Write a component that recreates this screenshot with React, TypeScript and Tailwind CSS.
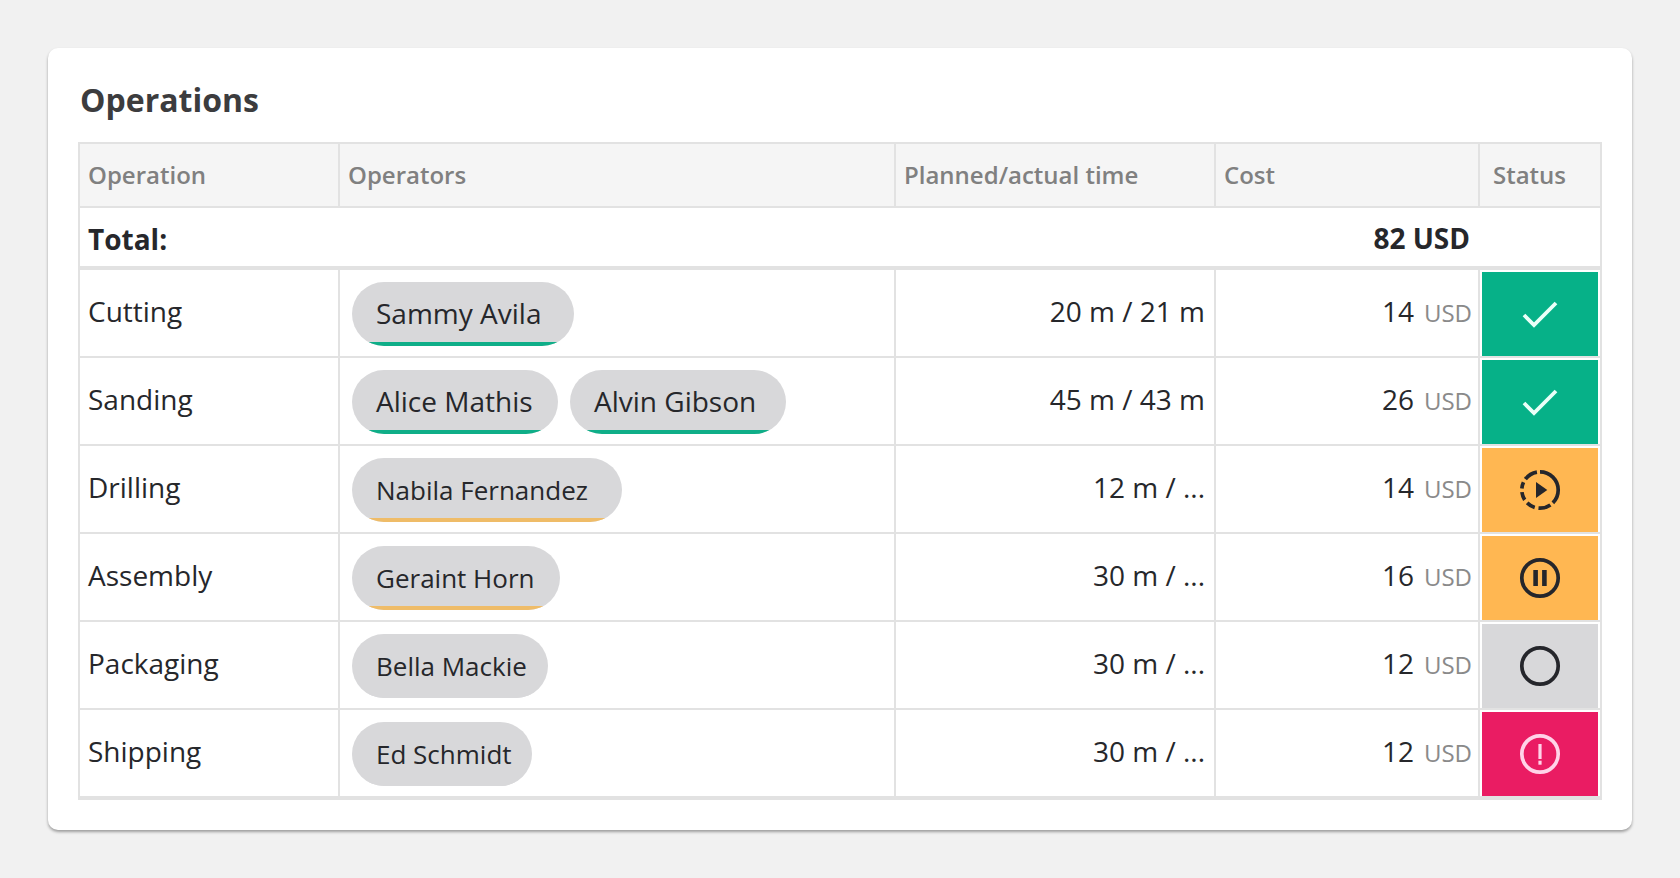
import type { ReactNode } from "react";

type Status = "done" | "running" | "paused" | "idle" | "alert";

const ROWS: {
  name: string;
  people: { name: string; width: string; text: string }[];
  bar?: "green" | "amber";
  time: string;
  cost: number;
  status: Status;
}[] = [
  { name: "Cutting", people: [{ name: "Sammy Avila", width: "w-[222px]", text: "pt-[1px] text-[28px]" }], bar: "green", time: "20 m / 21 m", cost: 14, status: "done" },
  {
    name: "Sanding",
    people: [
      { name: "Alice Mathis", width: "w-[206px]", text: "pt-[1px] text-[28px]" },
      { name: "Alvin Gibson", width: "w-[216px]", text: "pt-[1px] text-[28px]" },
    ],
    bar: "green",
    time: "45 m / 43 m",
    cost: 26,
    status: "done",
  },
  { name: "Drilling", people: [{ name: "Nabila Fernandez", width: "w-[270px]", text: "pt-[4px] text-[26px]" }], bar: "amber", time: "12 m / ...", cost: 14, status: "running" },
  { name: "Assembly", people: [{ name: "Geraint Horn", width: "w-[208px]", text: "pt-[4px] text-[26px]" }], bar: "amber", time: "30 m / ...", cost: 16, status: "paused" },
  { name: "Packaging", people: [{ name: "Bella Mackie", width: "w-[196px]", text: "pt-[4px] text-[26px]" }], time: "30 m / ...", cost: 12, status: "idle" },
  { name: "Shipping", people: [{ name: "Ed Schmidt", width: "w-[180px]", text: "pt-[4px] text-[26px]" }], time: "30 m / ...", cost: 12, status: "alert" },
];

const STATUS_BG: Record<Status, string> = {
  done: "bg-[#06b188]",
  running: "bg-[#ffb752]",
  paused: "bg-[#ffb752]",
  idle: "bg-[#d8d8da]",
  alert: "bg-[#ea1c63]",
};

function StatusIcon({ status }: { status: Status }) {
  if (status === "done") {
    return (
      <svg width="36" height="28" viewBox="0 0 36 28" fill="none">
        <path d="M2 15 L12 25 L34 3" stroke="#eafff8" strokeWidth="3.8" />
      </svg>
    );
  }
  const color = status === "alert" ? "#ffd3e8" : "#25262b";
  return (
    <svg width="42" height="42" viewBox="0 0 42 42" fill="none">
      <circle
        cx="21"
        cy="21"
        r="18.2"
        stroke={color}
        strokeWidth="3.7"
        pathLength={status === "running" ? 360 : undefined}
        strokeDasharray={status === "running" ? "135 10 40 12 28 12 26 12 20 12 43 10" : undefined}
        transform="rotate(-90 21 21)"
      />
      {status === "running" && <path d="M17 13 L28.3 21 L17 29 Z" fill={color} />}
      {status === "paused" && (
        <>
          <rect x="14.3" y="13" width="4.6" height="16" fill={color} />
          <rect x="23.1" y="13" width="4.6" height="16" fill={color} />
        </>
      )}
      {status === "alert" && (
        <>
          <rect x="19.4" y="11" width="3.2" height="15" fill={color} />
          <rect x="19.4" y="27.7" width="3.2" height="4" fill={color} />
        </>
      )}
    </svg>
  );
}

function Pill({ name, width, text, bar }: { name: string; width: string; text: string; bar?: "green" | "amber" }) {
  return (
    <div className={`flex h-[64px] flex-col overflow-hidden rounded-full bg-[#d8d8da] ${width}`}>
      <div className={`flex flex-1 items-center pl-[24px] text-[#26272b] ${text}`}>{name}</div>
      <div
        className={`h-[4px] shrink-0 ${
          bar === "green" ? "bg-[#0fae88]" : bar === "amber" ? "bg-[#efbc68]" : "bg-[#d8d8da]"
        }`}
      />
    </div>
  );
}

function Head({ children, inset }: { children: ReactNode; inset?: boolean }) {
  return (
    <th
      className={`h-[64px] border-r-2 border-b-2 border-[#e2e2e2] pr-[8px] text-left text-[24px] font-semibold text-[#808080] ${
        inset ? "pl-[13px]" : "pl-[8px]"
      }`}
    >
      {children}
    </th>
  );
}

export default function App() {
  return (
    <div className="min-h-[878px] bg-[#f1f1f1] px-[48px] pt-[48px] font-['Open_Sans',sans-serif]">
      <div className="h-[782px] w-[1584px] rounded-[10px] bg-white px-[30px] pt-[28px] shadow-[0_2px_3px_rgba(0,0,0,0.35)]">
        <h1 className="mb-[18px] h-[48px] pl-[2px] text-[32px] leading-[48px] font-bold text-[#3c3c3e]">Operations</h1>
        <table className="w-[1524px] table-fixed border-collapse border-2 border-[#e2e2e2] text-[#26272b]">
          <colgroup>
            <col className="w-[260px]" />
            <col className="w-[556px]" />
            <col className="w-[320px]" />
            <col className="w-[264px]" />
            <col />
          </colgroup>
          <thead>
            <tr className="bg-[#f5f5f5]">
              <Head>Operation</Head>
              <Head>Operators</Head>
              <Head>Planned/actual time</Head>
              <Head>Cost</Head>
              <Head inset>Status</Head>
            </tr>
          </thead>
          <tbody>
            <tr className="h-[61px] border-b-4 border-[#e2e2e2] text-[28px] font-bold">
              <td className="px-[8px] pt-[4px]" colSpan={3}>
                Total:
              </td>
              <td className="pt-[2px] pr-[9px] text-right">82 USD</td>
              <td />
            </tr>
            {ROWS.map((row) => (
              <tr key={row.name} className="h-[88px] border-b-2 border-[#e2e2e2] text-[28px] last:border-b-4">
                <td className="border-r-2 border-[#e2e2e2] px-[8px] pb-[4px]">{row.name}</td>
                <td className="border-r-2 border-[#e2e2e2] px-[12px] pt-[2px]">
                  <div className="flex gap-[12px]">
                    {row.people.map((p) => (
                      <Pill key={p.name} name={p.name} width={p.width} text={p.text} bar={row.bar} />
                    ))}
                  </div>
                </td>
                <td className="border-r-2 border-[#e2e2e2] pr-[9px] pb-[4px] text-right whitespace-nowrap">{row.time}</td>
                <td className="border-r-2 border-[#e2e2e2] pr-[6px] pb-[4px] text-right whitespace-nowrap">
                  {row.cost}
                  <span className="ml-[10px] text-[24px] text-[#8a8a8a]">USD</span>
                </td>
                <td className="px-[2px] pt-[2px]">
                  <div className={`flex h-[84px] items-center justify-center ${STATUS_BG[row.status]}`}>
                    <StatusIcon status={row.status} />
                  </div>
                </td>
              </tr>
            ))}
          </tbody>
        </table>
      </div>
    </div>
  );
}
